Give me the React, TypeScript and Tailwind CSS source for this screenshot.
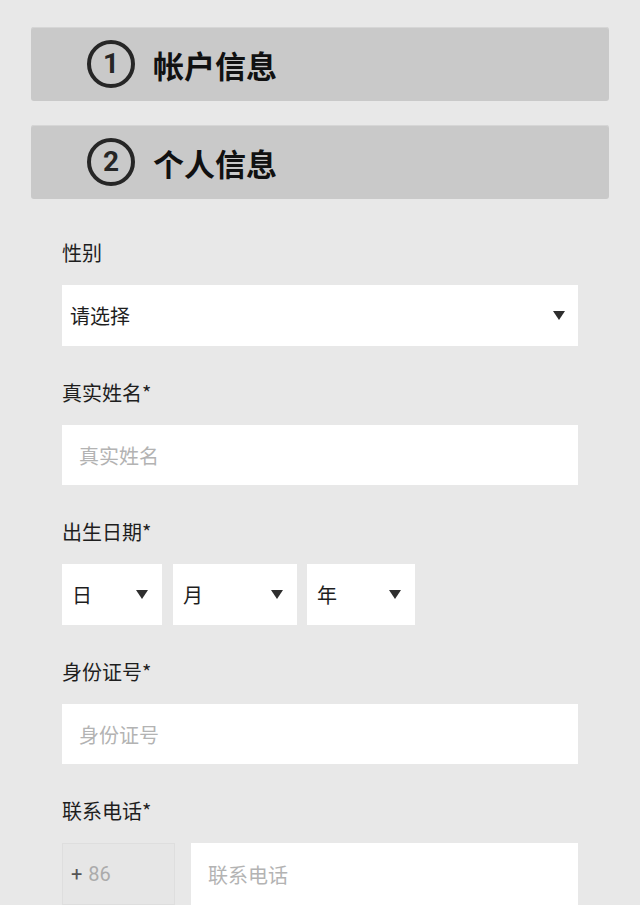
import React from 'react';

const font = { fontFamily: '"Noto Sans CJK SC", "Noto Sans", sans-serif' };

function StepHeader({ num, title }: { num: string; title: string }) {
    return (
        <div className="flex h-[74px] items-center rounded-[3px] bg-[#c9c9c9] pl-[56px] shadow-[inset_0_1px_0_#d6d6d6]">
            <div className="flex h-[48px] w-[48px] items-center justify-center rounded-full border-[4px] border-[#262626]">
                <span className="text-[28px] font-bold leading-none text-[#262626]" style={{ fontFamily: 'Roboto, "Noto Sans", sans-serif' }}>
                    {num}
                </span>
            </div>
            <span className="ml-[18px] text-[31px] font-bold leading-none text-[#111]">{title}</span>
        </div>
    );
}

function Arrow() {
    return (
        <svg width="12" height="9" viewBox="0 0 12 9" className="shrink-0">
            <polygon points="0,0 12,0 6,9" fill="#2e2e2e" />
        </svg>
    );
}

function Label({ children }: { children: React.ReactNode }) {
    return <div className="mb-[18px] h-[28px] text-[20px] leading-[28px] text-[#1e1e1e]">{children}</div>;
}

function SelectBox({ text, className }: { text: string; className: string }) {
    return (
        <div className={`flex h-[61px] items-center justify-between bg-white ${className}`}>
            <span className="text-[20px] text-[#1e1e1e]">{text}</span>
            <Arrow />
        </div>
    );
}

function TextInput({ placeholder, className = '' }: { placeholder: string; className?: string }) {
    return (
        <input
            className={`h-[60px] bg-white pl-[17px] text-[20px] text-[#222] outline-none placeholder:text-[#b3b3b3] ${className}`}
            placeholder={placeholder}
            style={font}
        />
    );
}

export default function App() {
    return (
        <div className="h-[905px] overflow-hidden bg-[#e8e8e8] px-[31px] pt-[27px]" style={font}>
            <div className="flex flex-col gap-[24px]">
                <StepHeader num="1" title="帐户信息" />
                <StepHeader num="2" title="个人信息" />
            </div>

            <div className="flex flex-col px-[31px] pt-[40px]">
                <Label>性别</Label>
                <SelectBox text="请选择" className="pl-[8px] pr-[13px]" />

                <div className="mt-[33px]">
                    <Label>真实姓名*</Label>
                    <TextInput placeholder="真实姓名" className="w-full" />
                </div>

                <div className="mt-[33px]">
                    <Label>出生日期*</Label>
                    <div className="flex">
                        <SelectBox text="日" className="mr-[11px] w-[100px] pl-[10px] pr-[14px]" />
                        <SelectBox text="月" className="mr-[10px] w-[124px] pl-[10px] pr-[14px]" />
                        <SelectBox text="年" className="w-[108px] pl-[10px] pr-[14px]" />
                    </div>
                </div>

                <div className="mt-[33px]">
                    <Label>身份证号*</Label>
                    <TextInput placeholder="身份证号" className="w-full" />
                </div>

                <div className="mt-[33px]">
                    <Label>联系电话*</Label>
                    <div className="flex gap-[16px]">
                        <div
                            className="flex h-[62px] w-[113px] items-center border border-[#dedede] bg-[#e6e6e6] pl-[8px] text-[20px]"
                            style={{ fontFamily: 'Roboto, "Noto Sans", sans-serif' }}
                        >
                            <span className="text-[#555]">+</span>
                            <span className="ml-[6px] text-[#ababab]">86</span>
                        </div>
                        <TextInput placeholder="联系电话" className="h-[62px] min-w-0 flex-1" />
                    </div>
                </div>
            </div>
        </div>
    );
}
